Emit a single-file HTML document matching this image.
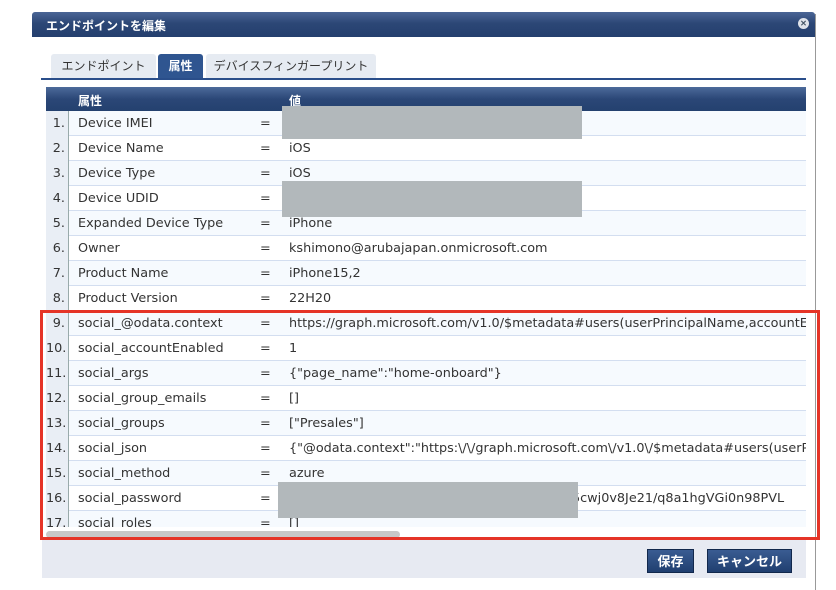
<!DOCTYPE html>
<html><head><meta charset="utf-8"><style>
*{margin:0;padding:0;box-sizing:border-box}
body{width:836px;height:590px;background:#fff;position:relative;overflow:hidden;font-family:"DejaVu Sans","Noto Sans CJK JP",sans-serif;font-size:12.8px;color:#333}
.title{position:absolute;left:32px;top:12px;width:783px;height:25px;background:linear-gradient(#4a6595,#2c4776 45%,#243f6e);color:#fff;font-weight:bold;font-size:12px;padding:5px 0 0 14px;border-radius:3px 3px 0 0;font-family:"Liberation Sans","Noto Sans CJK JP",sans-serif}
.close{position:absolute;right:6px;top:6px;width:11px;height:11px;border-radius:50%;background:#dfe3ea;color:#456;font-size:8px;line-height:11px;text-align:center}
.dlgr{position:absolute;left:815px;top:14px;width:1px;height:576px;background:#999}
.tab{position:absolute;top:54px;height:24px;background:#e6ebf2;font-size:12px;color:#333;text-align:center;line-height:24px;border-radius:3px 3px 0 0;font-family:"Liberation Sans","Noto Sans CJK JP",sans-serif}
.tab.a{background:#2f5590;color:#fff;font-weight:bold}
.tline{position:absolute;left:41px;top:78px;width:765px;height:2px;background:#2a4e8a}
.hdr{position:absolute;left:46px;top:87px;width:760px;height:24px;background:linear-gradient(#4c6a9a,#2b4777 50%,#24416f);color:#fff;font-weight:bold;font-size:12px;font-family:"Liberation Sans","Noto Sans CJK JP",sans-serif}
.tbl{position:absolute;left:46px;top:111px;width:760px;height:416px;overflow:hidden}
.r{position:relative;height:25px;border-bottom:1px solid #d3def0;background:#fff;white-space:nowrap}
.r:nth-child(odd){background:#f6fafe}
.n{position:absolute;left:0;top:0;width:23px;height:25px;background:#e9eef5;border-right:1px solid #9aa;text-align:right;padding-right:3px;line-height:25px}
.k{position:absolute;left:32px;line-height:25px}
.e{position:absolute;left:214px;line-height:25px}
.v{position:absolute;left:243px;line-height:25px}
.gray{position:absolute;background:#b2b8bb}
.red{position:absolute;left:40px;top:310px;width:780px;height:230px;border:3px solid #e53427}
.sb{position:absolute;left:46px;top:531px;width:354px;height:7px;background:#c8c8c8;border-radius:4px}
.foot{position:absolute;left:42px;top:540px;width:764px;height:38px;background:#e7eaf2}
.btn{position:absolute;top:549px;height:24px;background:linear-gradient(#3a5c92,#203f70);color:#fff;font-weight:bold;font-size:13px;line-height:24px;text-align:center;border:1px solid #12284c;font-family:"Liberation Sans","Noto Sans CJK JP",sans-serif}
</style></head><body>
<div class="title">エンドポイントを編集<div class="close">✕</div></div>
<div class="dlgr"></div>
<div class="tab" style="left:51px;width:105px">エンドポイント</div>
<div class="tab a" style="left:158px;width:45px">属性</div>
<div class="tab" style="left:206px;width:170px">デバイスフィンガープリント</div>
<div class="tline"></div>
<div class="hdr"><span style="position:absolute;left:32px;top:5px">属性</span><span style="position:absolute;left:243px;top:5px">値</span></div>
<div class="tbl">
<div class="r"><span class="n">1.</span><span class="k">Device IMEI</span><span class="e">=</span></div>
<div class="r"><span class="n">2.</span><span class="k">Device Name</span><span class="e">=</span><span class="v">iOS</span></div>
<div class="r"><span class="n">3.</span><span class="k">Device Type</span><span class="e">=</span><span class="v">iOS</span></div>
<div class="r"><span class="n">4.</span><span class="k">Device UDID</span><span class="e">=</span></div>
<div class="r"><span class="n">5.</span><span class="k">Expanded Device Type</span><span class="e">=</span><span class="v">iPhone</span></div>
<div class="r"><span class="n">6.</span><span class="k">Owner</span><span class="e">=</span><span class="v">kshimono@arubajapan.onmicrosoft.com</span></div>
<div class="r"><span class="n">7.</span><span class="k">Product Name</span><span class="e">=</span><span class="v">iPhone15,2</span></div>
<div class="r"><span class="n">8.</span><span class="k">Product Version</span><span class="e">=</span><span class="v">22H20</span></div>
<div class="r"><span class="n">9.</span><span class="k">social_@odata.context</span><span class="e">=</span><span class="v">https://graph.microsoft.com/v1.0/$metadata#users(userPrincipalName,accountEnabled)</span></div>
<div class="r"><span class="n">10.</span><span class="k">social_accountEnabled</span><span class="e">=</span><span class="v">1</span></div>
<div class="r"><span class="n">11.</span><span class="k">social_args</span><span class="e">=</span><span class="v">{"page_name":"home-onboard"}</span></div>
<div class="r"><span class="n">12.</span><span class="k">social_group_emails</span><span class="e">=</span><span class="v">[]</span></div>
<div class="r"><span class="n">13.</span><span class="k">social_groups</span><span class="e">=</span><span class="v">["Presales"]</span></div>
<div class="r"><span class="n">14.</span><span class="k">social_json</span><span class="e">=</span><span class="v">{"@odata.context":"https:\/\/graph.microsoft.com\/v1.0\/$metadata#users(userPrincipalName)"}</span></div>
<div class="r"><span class="n">15.</span><span class="k">social_method</span><span class="e">=</span><span class="v">azure</span></div>
<div class="r"><span class="n">16.</span><span class="k">social_password</span><span class="e">=</span><span class="v" style="left:526px">5cwj0v8Je21/q8a1hgVGi0n98PVL</span></div>
<div class="r"><span class="n">17.</span><span class="k">social_roles</span><span class="e">=</span><span class="v">[]</span></div>
</div>
<div class="gray" style="left:282px;top:106px;width:300px;height:33px"></div>
<div class="gray" style="left:282px;top:181px;width:300px;height:36px"></div>
<div class="gray" style="left:278px;top:482px;width:300px;height:36px"></div>
<div class="sb"></div>
<div class="foot"></div>
<div class="btn" style="left:647px;width:47px">保存</div>
<div class="btn" style="left:707px;width:85px">キャンセル</div>
<div class="red"></div>
</body></html>
